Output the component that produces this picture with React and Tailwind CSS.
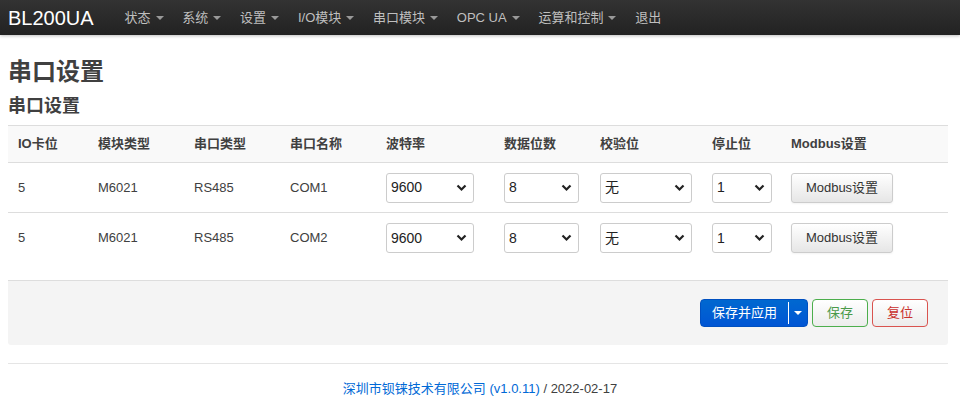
import React from "react";

const font = { fontFamily: '"Liberation Sans", Arial, "Noto Sans CJK SC", sans-serif' };

function Caret({ className = "" }) {
  return (
    <span
      className={`inline-block w-0 h-0 border-l-[4px] border-r-[4px] border-t-[4px] border-l-transparent border-r-transparent ${className}`}
    />
  );
}

function Select({ value, w }) {
  return (
    <div
      className={`${w} h-[30px] flex items-center justify-between border border-[#ccc] rounded-[3px] bg-white pl-[4px] pr-[6px] text-[14px] text-[#222]`}
    >
      <span>{value}</span>
      <svg width="11" height="8" viewBox="0 0 11 8">
        <path d="M1.5 1.5 L5.5 5.5 L9.5 1.5" stroke="#222" strokeWidth="2.2" fill="none" />
      </svg>
    </div>
  );
}

const navItems = ["状态", "系统", "设置", "I/O模块", "串口模块", "OPC UA", "运算和控制"];

const cols = [
  { label: "IO卡位", w: "w-[80px]" },
  { label: "模块类型", w: "w-[96px]" },
  { label: "串口类型", w: "w-[96px]" },
  { label: "串口名称", w: "w-[96px]" },
  { label: "波特率", w: "w-[118px]" },
  { label: "数据位数", w: "w-[96px]" },
  { label: "校验位", w: "w-[112px]" },
  { label: "停止位", w: "w-[79px]" },
  { label: "Modbus设置", w: "flex-1" },
];

function Row({ com, last }) {
  return (
    <div className={`flex items-center h-[50px] text-[13px] text-[#404040] ${last ? "" : "border-b border-[#ddd]"}`}>
      <div className="w-[80px] pl-[10px]">5</div>
      <div className="w-[96px] pl-[10px]">M6021</div>
      <div className="w-[96px] pl-[10px]">RS485</div>
      <div className="w-[96px] pl-[10px]">{com}</div>
      <div className="w-[118px] pl-[10px]"><Select value="9600" w="w-[88px]" /></div>
      <div className="w-[96px] pl-[10px]"><Select value="8" w="w-[75px]" /></div>
      <div className="w-[112px] pl-[10px]"><Select value="无" w="w-[92px]" /></div>
      <div className="w-[79px] pl-[10px]"><Select value="1" w="w-[60px]" /></div>
      <div className="flex-1 pl-[10px]">
        <button className="w-[102px] h-[30px] border border-[#ccc] rounded-[3px] bg-gradient-to-b from-white to-[#e6e6e6] text-[13px] text-[#333] shadow-[0_1px_2px_rgba(0,0,0,0.05)]">
          Modbus设置
        </button>
      </div>
    </div>
  );
}

export default function App() {
  return (
    <div style={font} className="w-[960px] h-[411px] bg-white overflow-hidden">
      <div className="h-[35px] bg-gradient-to-b from-[#333] to-[#222] flex items-center shadow-[0_1px_3px_rgba(0,0,0,0.25)]">
        <div className="pl-[8px] pr-[21.5px] text-[20px] text-white leading-none">BL200UA</div>
        {navItems.map((n) => (
          <div key={n} className="px-[9.4px] flex items-center text-[13px] text-[#bfbfbf]">
            <span>{n}</span>
            <Caret className="ml-[5px] border-t-[#999]" />
          </div>
        ))}
        <div className="px-[9.4px] text-[13px] text-[#bfbfbf]">退出</div>
      </div>

      <div className="px-[8px]">
        <h1 className="mt-[21px] text-[24px] font-bold text-[#404040] leading-[32px]">串口设置</h1>
        <h2 className="mt-[6px] text-[18px] font-bold text-[#404040] leading-[24px]">串口设置</h2>

        <div className="mt-[7px] w-[940px] border-t border-[#ddd]">
          <div className="flex items-center h-[37px] bg-[#f9f9f9] border-b border-[#ddd] text-[13px] font-bold text-[#404040]">
            {cols.map((c) => (
              <div key={c.label} className={`${c.w} pl-[10px]`}>{c.label}</div>
            ))}
          </div>
          <Row com="COM1" />
          <Row com="COM2" last />
        </div>

        <div className="mt-[17px] w-[940px] h-[65px] bg-[#f4f4f4] border-t border-[#ddd] rounded-b-[3px] flex items-center justify-end pr-[20px] gap-[4px]">
          <div className="h-[28px] flex items-center rounded-[4px] bg-gradient-to-b from-[#0068d0] to-[#0055d4] border border-[#0050c0] text-white text-[13px]">
            <span className="px-[11px]">保存并应用</span>
            <span className="h-[22px] w-px bg-white" />
            <span className="w-[18px] flex justify-center"><Caret className="border-t-white border-l-[3px] border-r-[3px] border-t-[3px]" /></span>
          </div>
          <button className="w-[56px] h-[28px] rounded-[4px] border border-[#4cae4c] bg-gradient-to-b from-white to-[#ececec] text-[13px] text-[#4a9a4a]">保存</button>
          <button className="w-[56px] h-[28px] rounded-[4px] border border-[#d9534f] bg-gradient-to-b from-white to-[#ececec] text-[13px] text-[#c9302c]">复位</button>
        </div>

        <div className="mt-[18px] w-[940px] border-t border-[#e5e5e5]" />
        <div className="pt-[15px] text-center text-[13px]">
          <span className="text-[#0069d6]">深圳市钡铼技术有限公司 (v1.0.11)</span>
          <span className="text-[#404040]"> / 2022-02-17</span>
        </div>
      </div>
    </div>
  );
}
